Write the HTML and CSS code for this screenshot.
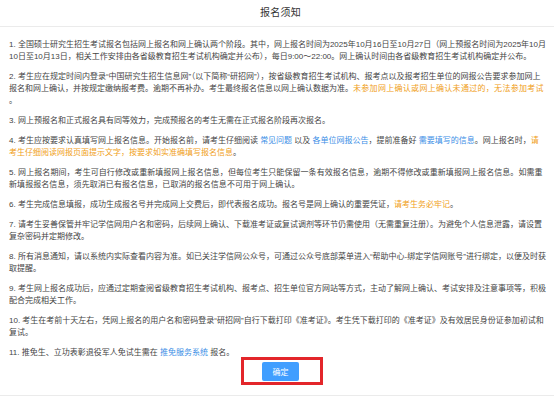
FILE: index.html
```html
<!DOCTYPE html>
<html lang="zh-CN">
<head>
  <meta charset="UTF-8" />
  <meta name="viewport" content="width=device-width, initial-scale=1.0"/>
  <title>报名须知</title>
  <link rel="stylesheet" href="styles.css">
</head>
<body>
  <div class="dialog">
    <div class="dialog-header">报名须知</div>

    <div class="dialog-body">
      <p>1. 全国硕士研究生招生考试报名包括网上报名和网上确认两个阶段。其中，网上报名时间为2025年10月16日至10月27日（网上预报名时间为2025年10月10日至10月13日，相关工作安排由各省级教育招生考试机构确定并公布），每日9:00～22:00。网上确认时间由各省级教育招生考试机构确定并公布。</p>
      <p class="loose">2. 考生应在规定时间内登录“中国研究生招生信息网”（以下简称“研招网”），按省级教育招生考试机构、报考点以及报考招生单位的网报公告要求参加网上报名和网上确认，并按规定缴纳报考费。逾期不再补办。考生最终报名信息以网上确认数据为准。<span class="warn">未参加网上确认或网上确认未通过的，无法参加考试</span>。</p>
      <p>3. 网上预报名和正式报名具有同等效力，完成预报名的考生无需在正式报名阶段再次报名。</p>
      <p>4. 考生应按要求认真填写网上报名信息。开始报名前，请考生仔细阅读 <a href="#">常见问题</a> 以及 <a href="#">各单位网报公告</a>，提前准备好 <a href="#">需要填写的信息</a>。网上报名时，<span class="warn">请考生仔细阅读网报页面提示文字，按要求如实准确填写报名信息</span>。</p>
      <p class="wide">5. 网上报名期间，考生可自行修改或重新填报网上报名信息，但每位考生只能保留一条有效报名信息，逾期不得修改或重新填报网上报名信息。如需重新填报报名信息，须先取消已有报名信息，已取消的报名信息不可用于网上确认。</p>
      <p>6. 考生完成信息填报，成功生成报名号并完成网上交费后，即代表报名成功。报名号是网上确认的重要凭证，<span class="warn">请考生务必牢记</span>。</p>
      <p>7. 请考生妥善保管并牢记学信网用户名和密码，后续网上确认、下载准考证或复试调剂等环节仍需使用（无需重复注册）。为避免个人信息泄露，请设置复杂密码并定期修改。</p>
      <p>8. 所有消息通知，请以系统内实际查看内容为准。如已关注学信网公众号，可通过公众号底部菜单进入“帮助中心-绑定学信网账号”进行绑定，以便及时获取提醒。</p>
      <p>9. 考生网上报名成功后，应通过定期查阅省级教育招生考试机构、报考点、招生单位官方网站等方式，主动了解网上确认、考试安排及注意事项等，积极配合完成相关工作。</p>
      <p>10. 考生在考前十天左右，凭网上报名的用户名和密码登录“研招网”自行下载打印《准考证》。考生凭下载打印的《准考证》及有效居民身份证参加初试和复试。</p>
      <p>11. 推免生、立功表彰退役军人免试生需在 <a href="#">推免服务系统</a> 报名。</p>
    </div>

    <div class="dialog-footer">
      <div class="confirm-wrap">
        <button class="btn-confirm">确定</button>
        <span class="mark"></span>
      </div>
    </div>
  </div>
</body>
</html>
```

FILE: styles.css
```css
* {
  box-sizing: border-box;
  margin: 0;
  padding: 0;
}

html, body {
  overflow: hidden;
}

body {
  font-family: "Liberation Sans", "Noto Sans CJK SC", sans-serif;
  background-color: #fff;
  color: #333;
}

.dialog {
  width: 561px;
}

.dialog-header {
  height: 27px;
  line-height: 25px;
  text-align: center;
  font-size: 10px;
  letter-spacing: 0.3px;
  color: #333;
  border-bottom: 1px solid #ebebeb;
}

.dialog-body {
  padding: 12px 15px 0 9px;
}

.dialog-body p {
  font-size: 8px;
  line-height: 12px;
  color: #444;
  margin-bottom: 8px;
}

.dialog-body p.loose {
  line-break: anywhere;
}

.dialog-body p.loose .warn {
  letter-spacing: 0.3px;
}

.dialog-body p.wide {
  letter-spacing: 0.07px;
}

.dialog-body p:last-child {
  margin-bottom: 0;
}

.dialog-body a {
  color: #3a8ee6;
  text-decoration: none;
}

.warn {
  color: #f0a020;
}

.dialog-footer {
  display: flex;
  justify-content: center;
  padding: 3px 0 14px;
  border-bottom: 1px solid #ebebeb;
}

.confirm-wrap {
  position: relative;
}

.btn-confirm {
  display: block;
  width: 37px;
  height: 19px;
  border: none;
  border-radius: 2px;
  background-color: #409eff;
  color: #fff;
  font-family: "Noto Sans CJK SC", sans-serif;
  font-size: 8px;
  cursor: pointer;
}

.mark {
  position: absolute;
  left: -21px;
  top: -5px;
  width: 82px;
  height: 28px;
  border: 3px solid #e3262a;
}
```
